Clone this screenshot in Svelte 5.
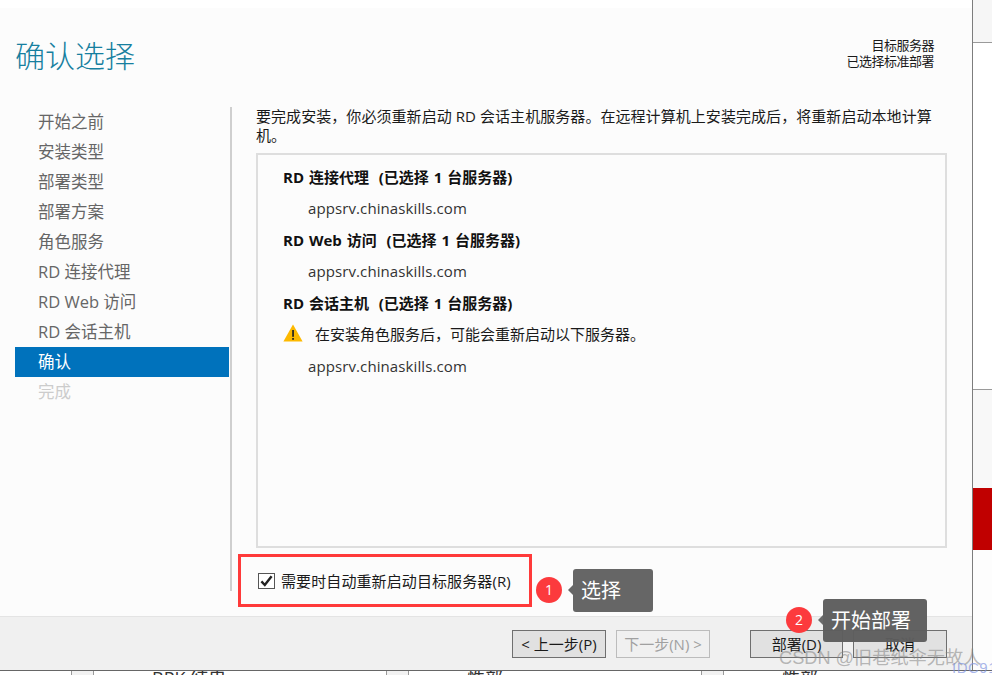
<script lang="ts">
  const steps = ['开始之前', '安装类型', '部署类型', '部署方案', '角色服务', 'RD 连接代理', 'RD Web 访问', 'RD 会话主机', '确认', '完成'];
  const activeStep = 8;
  const host = 'appsrv.chinaskills.com';
</script>

<div class="page">
  <div class="window">
    <div class="dialog">
      <div class="top-strip"></div>
      <div class="main">
        <header class="head">
          <h1>确认选择</h1>
          <div class="target">目标服务器<br />已选择标准部署</div>
        </header>
        <div class="body">
          <nav class="steps">
            {#each steps as step, i}
              <div class="step" class:active={i === activeStep} class:later={i > activeStep}>{step}</div>
            {/each}
          </nav>
          <div class="content">
            <p class="intro">要完成安装，你必须重新启动 RD 会话主机服务器。在远程计算机上安装完成后，将重新启动本地计算机。</p>
            <div class="summary">
              <h2>RD 连接代理&nbsp; (已选择 1 台服务器)</h2>
              <div class="host">{host}</div>
              <h2>RD Web 访问&nbsp; (已选择 1 台服务器)</h2>
              <div class="host">{host}</div>
              <h2>RD 会话主机&nbsp; (已选择 1 台服务器)</h2>
              <div class="warning">
                <svg width="20" height="18" viewBox="0 0 20 18" aria-hidden="true">
                  <path d="M10 0.5 L19.6 17.5 H0.4 Z" fill="#fdb900" />
                  <rect x="9.2" y="6" width="1.7" height="6.8" fill="#222" />
                  <rect x="9.2" y="14" width="1.7" height="1.8" fill="#222" />
                </svg>
                <span>在安装角色服务后，可能会重新启动以下服务器。</span>
              </div>
              <div class="host">{host}</div>
            </div>
            <div class="restart">
              <span class="checkbox">
                <svg width="13" height="12" viewBox="0 0 13 12" aria-hidden="true">
                  <path d="M1.4 6.4 L4.8 10 L11.6 1.2" fill="none" stroke="#222" stroke-width="2.4" />
                </svg>
              </span>
              <span>需要时自动重新启动目标服务器(R)</span>
            </div>
          </div>
        </div>
      </div>
      <footer class="footer">
        <button>&lt; 上一步(P)</button>
        <button class="disabled">下一步(N) &gt;</button>
        <button class="deploy">部署(D)</button>
        <button>取消</button>
      </footer>
    </div>

    <div class="side">
      <div class="side-a"></div>
      <div class="side-b"></div>
      <div class="side-c"></div>
      <div class="side-red"></div>
      <div class="side-d"></div>
    </div>
  </div>

  <div class="behind">
    <div class="cell w72"></div>
    <div class="cell knob"></div>
    <div class="cell w293"><span>BPK 结串</span></div>
    <div class="cell knob"></div>
    <div class="cell w293"><span>性部</span></div>
    <div class="cell knob"></div>
    <div class="cell rest"><span>性部</span></div>
  </div>

  <!-- 标注 -->
  <div class="red-box"></div>
  <div class="dot one">1</div>
  <div class="tip one">选择</div>
  <div class="dot two">2</div>
  <div class="tip two">开始部署</div>
  <div class="mark">CSDN @旧巷纸伞无故人</div>
  <div class="mark-idc">IDC91</div>
</div>

<style>
  :global(body) {
    margin: 0;
    background: #fff;
  }
  .page {
    position: relative;
    width: 992px;
    height: 675px;
    overflow: hidden;
    display: flex;
    flex-direction: column;
    font-family: "Open Sans", "Noto Sans CJK SC", sans-serif;
    color: #1a1a1a;
  }
  .window {
    display: flex;
    height: 670px;
  }
  .dialog {
    width: 972px;
    display: flex;
    flex-direction: column;
    border-right: 1px solid #7d7d7d;
    box-sizing: content-box;
  }
  .top-strip {
    height: 8px;
    background: #fff;
  }
  .main {
    flex: 1;
    background: #fcfcfc;
    display: flex;
    flex-direction: column;
  }
  .head {
    height: 99px;
    display: flex;
    justify-content: space-between;
    padding: 0 38px 0 15px;
  }
  h1 {
    margin: 28px 0 0;
    font-size: 30px;
    line-height: 40px;
    font-weight: 300;
    color: #167f9f;
  }
  .target {
    margin-top: 29px;
    text-align: right;
    font-size: 13px;
    line-height: 16px;
    letter-spacing: -0.5px;
  }
  .body {
    display: flex;
    flex: 1;
  }
  .steps {
    width: 214px;
    margin: 0 1px 25px 15px;
  }
  .step {
    height: 30px;
    line-height: 30.5px;
    padding-left: 23px;
    font-size: 16.5px;
    color: #666;
  }
  .step.active {
    background: #0072bc;
    color: #fff;
  }
  .step.later {
    color: #ccc;
  }
  .content {
    flex: 1;
    border-left: 2px solid #cfcfcf;
    margin-bottom: 25px;
    padding-left: 24px;
    margin-right: 25px;
    display: flex;
    flex-direction: column;
    box-sizing: border-box;
  }
  .intro {
    margin: 0 0 8px;
    font-size: 15px;
    line-height: 19px;
    height: 38px;
    padding-right: 8px;
    letter-spacing: 0.06px;
  }
  .summary {
    height: 395px;
    box-sizing: border-box;
    border: 2px solid #dedede;
    padding: 10px 25px 0;
  }
  h2 {
    margin: 0;
    font-size: 15px;
    line-height: 24px;
    font-weight: 700;
    height: 24px;
    color: #111;
    word-spacing: 1px;
  }
  .host {
    height: 39px;
    line-height: 39px;
    padding-left: 25px;
    font-size: 15px;
    color: #333;
    letter-spacing: 0.1px;
  }
  .warning {
    display: flex;
    align-items: center;
    height: 26px;
    margin: 5px 0 1px;
    font-size: 15px;
    gap: 12px;
  }
  .restart {
    display: flex;
    align-items: center;
    gap: 6px;
    margin: 23px 0 0 2px;
    font-size: 15px;
    line-height: 20px;
    letter-spacing: 0.1px;
  }
  .checkbox {
    width: 17px;
    height: 16px;
    box-sizing: border-box;
    border: 1px solid #555;
    background: #fff;
    display: flex;
    align-items: center;
    justify-content: center;
  }
  .footer {
    height: 54px;
    box-sizing: border-box;
    background: #f0f0f0;
    border-top: 1px solid #e4e4e4;
    display: flex;
    align-items: flex-start;
    gap: 10px;
    padding: 13px 25px 0 0;
    justify-content: flex-end;
  }
  button {
    width: 94px;
    height: 28px;
    padding: 0;
    background: #e1e1e1;
    border: 1px solid #6f6f6f;
    border-radius: 0;
    font: inherit;
    font-size: 15px;
    line-height: 24px;
    color: #1a1a1a;
  }
  button.disabled {
    background: #f0f0f0;
    border-color: #bcbcbc;
    color: #a0a0a0;
  }
  button.deploy {
    margin-left: 30px;
    width: 93px;
  }
  .side {
    width: 19px;
    display: flex;
    flex-direction: column;
  }
  .side-a {
    height: 42px;
    background: #f6f6f6;
    border-bottom: 1px solid #9a9a9a;
  }
  .side-b {
    height: 346px;
    background: #fff;
  }
  .side-c {
    height: 98px;
    background: #f8f8f8;
    border-top: 1px solid #9a9a9a;
  }
  .side-red {
    height: 62px;
    background: #c00000;
  }
  .side-d {
    flex: 1;
    background: #fdfdfd;
  }
  .behind {
    height: 5px;
    display: flex;
    background: #fff;
    border-top: 1px solid #666;
    box-sizing: border-box;
    overflow: hidden;
    font-size: 18px;
    color: #333;
  }
  .cell {
    line-height: 14px;
    box-sizing: border-box;
    border-right: 1px solid #999;
    white-space: nowrap;
  }
  .w72 {
    width: 72px;
  }
  .knob {
    width: 22px;
    background: #f2f2f2;
  }
  .w293 {
    width: 293px;
    padding-left: 58px;
  }
  .rest {
    flex: 1;
    padding-left: 58px;
    border-right: 0;
  }
  .red-box {
    position: absolute;
    left: 238px;
    top: 554px;
    width: 294px;
    height: 53px;
    box-sizing: border-box;
    border: 3px solid #ff3a3a;
  }
  .dot {
    position: absolute;
    width: 26px;
    height: 26px;
    border-radius: 50%;
    background: #fc3a3d;
    color: #fff;
    font-size: 14px;
    line-height: 25px;
    text-align: center;
  }
  .dot.one {
    left: 536px;
    top: 577px;
  }
  .dot.two {
    left: 786px;
    top: 607px;
  }
  .tip {
    position: absolute;
    height: 43px;
    line-height: 43px;
    box-sizing: border-box;
    padding-left: 8px;
    border-radius: 3px;
    background: #666;
    color: #fff;
    font-size: 20px;
  }
  .tip::before {
    content: "";
    position: absolute;
    left: -5px;
    top: 16px;
    border-top: 5px solid transparent;
    border-bottom: 5px solid transparent;
    border-right: 5px solid #666;
  }
  .tip.one {
    left: 573px;
    top: 569px;
    width: 80px;
  }
  .tip.two {
    left: 823px;
    top: 599px;
    width: 104px;
    background: #5e5e5e;
    opacity: 0.97;
  }
  .mark {
    position: absolute;
    left: 779px;
    top: 647px;
    font-size: 18.2px;
    line-height: 22px;
    white-space: nowrap;
    color: rgba(130, 130, 130, 0.55);
    font-family: "Liberation Sans", "Noto Sans CJK SC", sans-serif;
  }
  .mark-idc {
    position: absolute;
    left: 952px;
    top: 659px;
    font-size: 15px;
    line-height: 18px;
    letter-spacing: 0.5px;
    color: rgba(130, 150, 225, 0.7);
    font-family: "Liberation Sans", sans-serif;
  }
</style>
